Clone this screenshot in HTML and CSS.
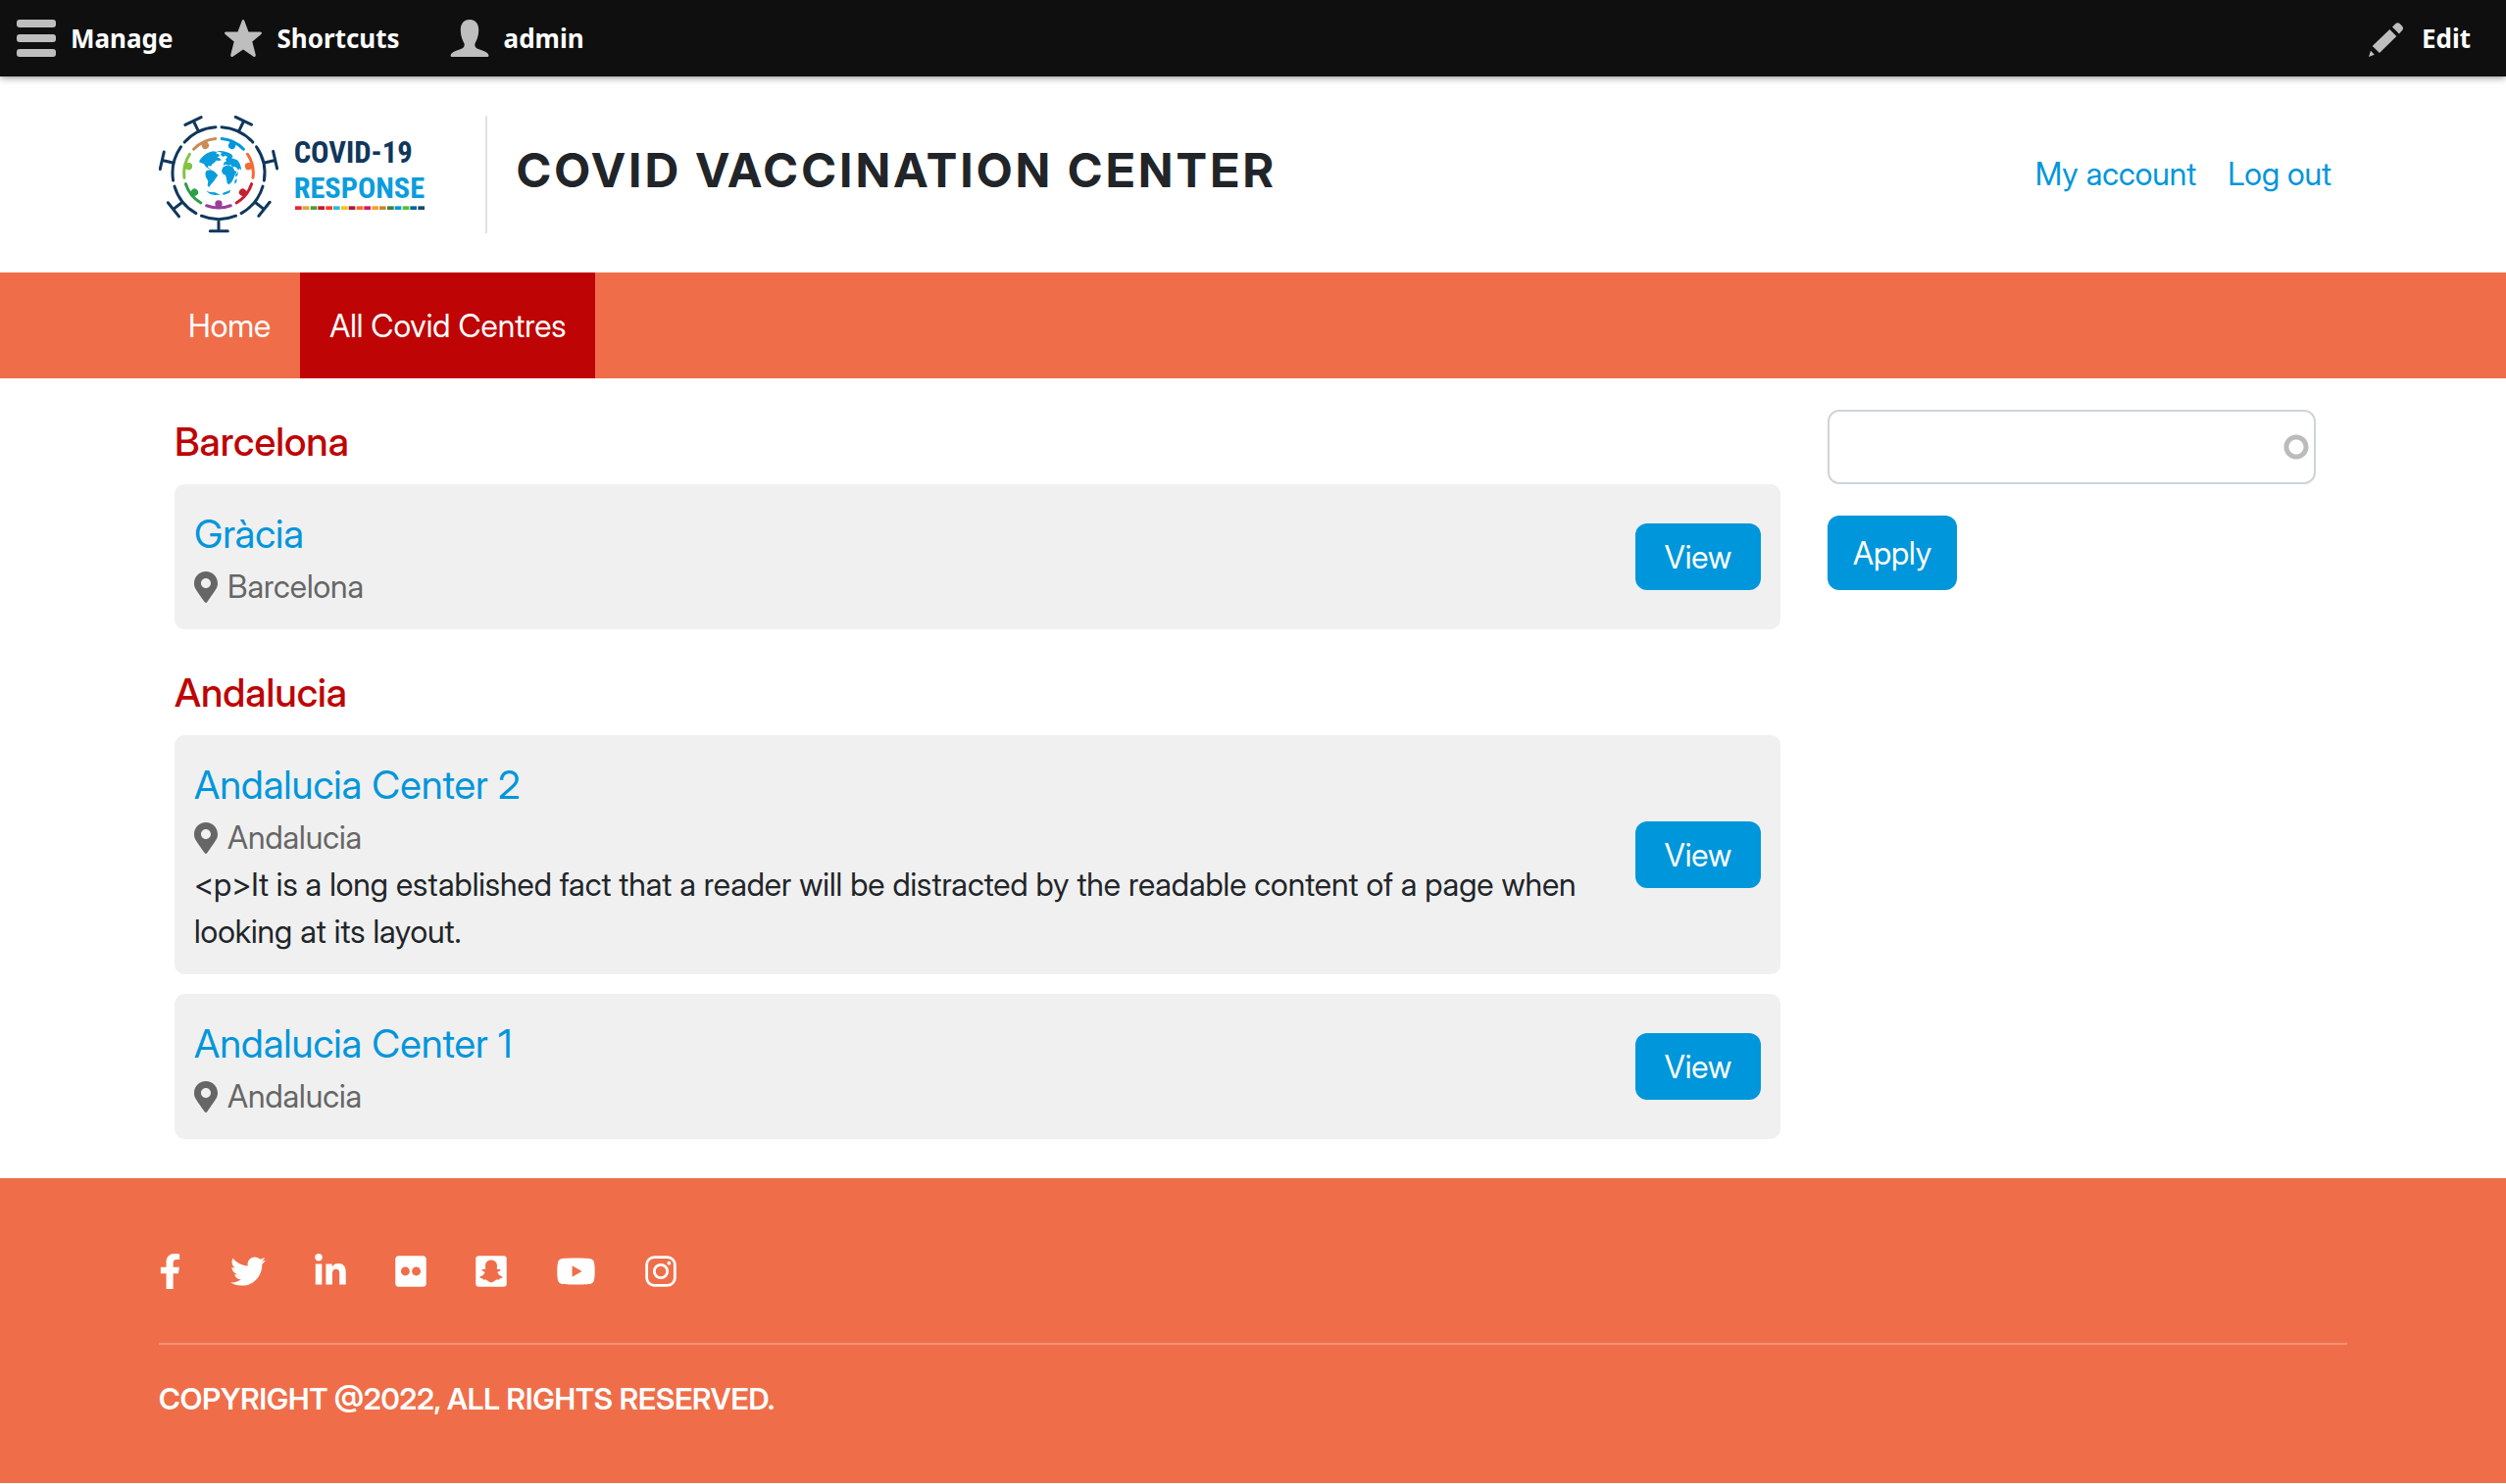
FILE: index.html
```
<!DOCTYPE html>
<html lang="en">
<head>
<meta charset="utf-8">
<meta name="viewport" content="width=device-width, initial-scale=1">
<title>All Covid Centres | Covid Vaccination Center</title>
<link rel="stylesheet" href="styles.css">
</head>
<body>
<svg class="sprite" aria-hidden="true">
  <symbol id="pin" viewBox="0 0 384 512"><path d="M172.268 501.67C26.97 291.031 0 269.413 0 192 0 85.961 85.961 0 192 0s192 85.961 192 192c0 77.413-26.97 99.031-172.268 309.67-9.535 13.774-29.93 13.773-39.464 0zM192 272c44.183 0 80-35.817 80-80s-35.817-80-80-80-80 35.817-80 80 35.817 80 80 80z"/></symbol>
</svg>

<nav class="toolbar" aria-label="Administration">
  <a class="toolbar-item" href="#manage">
    <svg class="toolbar-icon" viewBox="0 0 40 40"><rect y="1" width="40" height="8" rx="3"/><rect y="16" width="40" height="8" rx="3"/><rect y="31" width="40" height="8" rx="3"/></svg>
    Manage
  </a>
  <a class="toolbar-item" href="#shortcuts">
    <svg class="toolbar-icon" viewBox="0 0 40 40"><path d="M18.700 2.200Q20 -.2 21.300 2.200L25.500 13.500H37.600Q40 14 38.300 16L29.300 23.500L32.800 37Q32.800 39.800 30.500 38.700L20 31.500L9.500 38.700Q7.200 39.800 7.200 37L10.700 23.500L1.700 16Q0 14 2.400 13.500H14.500Z"/></svg>
    Shortcuts
  </a>
  <a class="toolbar-item" href="#user">
    <svg class="toolbar-icon" viewBox="0 0 40 40"><path d="M20 1C26 1 29.500 5.500 29.200 12C29 19 26.800 22.500 25.500 25.500C24.700 29 27 30.500 31 31.700C36 33.300 39 35 39.500 37.500Q39.500 39 38 39H2Q.5 39 .5 37.500C1 35 4 33.300 9 31.700C13 30.500 15.300 29 14.500 25.500C13.200 22.500 11 19 10.800 12C10.500 5.500 14 1 20 1Z"/></svg>
    admin
  </a>
  <a class="toolbar-item toolbar-edit" href="#edit">
    <svg class="toolbar-icon" viewBox="0 0 40 40"><path d="M1 39L3 32.800L6.800 36.800ZM22.300 11L29.300 18L12 35L4.700 28ZM25 8.500L28.500 5Q30.500 3.300 32.500 5L35 7.500Q37 9.800 35.300 11.800L32 15.500Z"/></svg>
    Edit
  </a>
</nav>

<header class="header">
  <div class="container header-row">
    <a class="logo" href="#home" aria-label="Home">
      <svg viewBox="36 54 816 360" width="272" height="120">
        <defs>
          <g id="spike"><path d="M166.200 360.700A141 141 0 0 0 271.800 360.700M219 371V407M193 407.500H247"/></g>
          <g id="person"><path d="M182 329.300A106 106 0 0 0 256 329.300" fill="none" stroke="currentColor" stroke-width="9" stroke-linecap="round"/><circle cx="219" cy="324" r="11" fill="currentColor"/></g>
        </defs>
        <g fill="none" stroke="#10375c" stroke-width="9" stroke-linecap="round">
          <use href="#spike"/>
          <use href="#spike" transform="rotate(51.430 219 230)"/>
          <use href="#spike" transform="rotate(102.860 219 230)"/>
          <use href="#spike" transform="rotate(154.290 219 230)"/>
          <use href="#spike" transform="rotate(205.710 219 230)"/>
          <use href="#spike" transform="rotate(257.140 219 230)"/>
          <use href="#spike" transform="rotate(308.570 219 230)"/>
        </g>
        <use href="#person" color="#9a3f98"/>
        <use href="#person" color="#2f9e49" transform="rotate(51.430 219 230)"/>
        <use href="#person" color="#82c341" transform="rotate(102.860 219 230)"/>
        <use href="#person" color="#cb8c55" transform="rotate(154.290 219 230)"/>
        <use href="#person" color="#0096dc" transform="rotate(205.710 219 230)"/>
        <use href="#person" color="#f36b37" transform="rotate(257.140 219 230)"/>
        <use href="#person" color="#c8202f" transform="rotate(308.570 219 230)"/>
        <g fill="#0a9ddd">
          <path d="M159 196C166 178 184 166 203 163L214 165L211 170L218 171L222 178L214 181L221 184L228 190L220 192L212 191L205 199L198 203L196 209L188 207L186 212L191 215L196 219L189 217L180 211L174 202L166 199Z"/>
          <path d="M213 163C229 160 246 164 258 172L263 180L258 184L268 187L276 190C284 199 288 209 288 221L282 215L280 222L274 214L268 210L261 212L257 205L248 206L240 203L233 207L235 198L243 193L240 188L246 181L240 176L231 180L224 172L230 168Z"/>
          <path d="M182 222L195 220L206 225L217 236L210 246L204 255L194 266L190 273L185 268L187 254L180 242L178 231Z"/>
          <path d="M232 212L241 207L255 208L263 213L268 223L275 225L269 235L265 245L259 257L251 265L245 261L243 247L240 236L231 232L228 222Z"/>
          <path d="M270 235L279 226L277 236L271 242ZM268 253L275 247L274 257L268 263ZM181 285L194 288L208 289L224 296L207 297L193 294ZM232 290L245 286L256 281L252 290L240 295L232 297Z"/>
        </g>
        <text class="logo-top" x="449" y="198">COVID-19</text>
        <text class="logo-bottom" x="449" y="305">RESPONSE</text>
        <g>
          <rect x="453" y="331" width="20" height="11" fill="#e5243b"/><rect x="476" y="331" width="20" height="11" fill="#dda63a"/><rect x="500" y="331" width="20" height="11" fill="#4c9f38"/><rect x="523" y="331" width="20" height="11" fill="#c5192d"/><rect x="547" y="331" width="20" height="11" fill="#ff3a21"/><rect x="570" y="331" width="20" height="11" fill="#26bde2"/><rect x="594" y="331" width="20" height="11" fill="#fcc30b"/><rect x="617" y="331" width="20" height="11" fill="#a21942"/><rect x="641" y="331" width="20" height="11" fill="#fd6925"/><rect x="664" y="331" width="20" height="11" fill="#dd1367"/><rect x="688" y="331" width="20" height="11" fill="#fd9d24"/><rect x="711" y="331" width="20" height="11" fill="#bf8b2e"/><rect x="735" y="331" width="20" height="11" fill="#3f7e44"/><rect x="758" y="331" width="20" height="11" fill="#0a97d9"/><rect x="782" y="331" width="20" height="11" fill="#56c02b"/><rect x="805" y="331" width="20" height="11" fill="#00689d"/><rect x="829" y="331" width="20" height="11" fill="#19486a"/>
        </g>
      </svg>
    </a>
    <h1 class="site-name">COVID VACCINATION CENTER</h1>
    <nav class="account" aria-label="User account">
      <a href="#account">My account</a>
      <a href="#logout">Log out</a>
    </nav>
  </div>
</header>

<nav class="menu" aria-label="Main">
  <div class="container menu-row">
    <a class="menu-link" href="#home">Home</a>
    <a class="menu-link active" href="#centres" aria-current="page">All Covid Centres</a>
  </div>
</nav>

<div class="container layout">
  <main class="content">
    <h2 class="region">Barcelona</h2>
    <div class="cards">
      <article class="card">
        <div class="card-body">
          <h3 class="card-title"><a href="#gracia">Gràcia</a></h3>
          <p class="place"><svg class="pin"><use href="#pin"/></svg>Barcelona</p>
        </div>
        <a class="btn btn-view" href="#gracia">View</a>
      </article>
    </div>
    <h2 class="region">Andalucia</h2>
    <div class="cards">
      <article class="card">
        <div class="card-body">
          <h3 class="card-title"><a href="#andalucia-2">Andalucia Center 2</a></h3>
          <p class="place"><svg class="pin"><use href="#pin"/></svg>Andalucia</p>
          <p class="summary">&lt;p&gt;It is a long established fact that a reader will be distracted by the readable content of a page when looking at its layout.</p>
        </div>
        <a class="btn btn-view" href="#andalucia-2">View</a>
      </article>
      <article class="card">
        <div class="card-body">
          <h3 class="card-title"><a href="#andalucia-1">Andalucia Center 1</a></h3>
          <p class="place"><svg class="pin"><use href="#pin"/></svg>Andalucia</p>
        </div>
        <a class="btn btn-view" href="#andalucia-1">View</a>
      </article>
    </div>
  </main>
  <aside class="sidebar">
    <form class="search">
      <input class="search-input" type="text" name="title" aria-label="Centre name" autocomplete="off">
      <button class="btn btn-apply" type="submit">Apply</button>
    </form>
  </aside>
</div>

<footer class="footer">
  <div class="container">
    <div class="social">
      <a href="#facebook" aria-label="Facebook"><svg width="23" height="36" viewBox="0 0 320 512"><path d="M279.140 288l14.220-92.660h-88.910v-60.130c0-25.350 12.420-50.060 52.240-50.060h40.420V6.260S260.430 0 225.360 0c-73.220 0-121.080 44.380-121.080 124.720v70.620H22.890V288h81.390v224h100.170V288z"/></svg></a>
      <a href="#twitter" aria-label="Twitter"><svg width="36" height="36" viewBox="0 0 512 512"><path d="M459.370 151.716c.325 4.548.325 9.097.325 13.645 0 138.720-105.583 298.558-298.558 298.558-59.452 0-114.680-17.219-161.137-47.106 8.447.974 16.568 1.299 25.340 1.299 49.055 0 94.213-16.568 130.274-44.832-46.132-.975-84.792-31.188-98.112-72.772 6.498.974 12.995 1.624 19.818 1.624 9.421 0 18.843-1.300 27.614-3.573-48.081-9.747-84.143-51.980-84.143-102.985v-1.299c13.969 7.797 30.214 12.670 47.431 13.319-28.264-18.843-46.781-51.005-46.781-87.391 0-19.492 5.197-37.360 14.294-52.954 51.655 63.675 129.300 105.258 216.365 109.807-1.624-7.797-2.599-15.918-2.599-24.040 0-57.828 46.782-104.934 104.934-104.934 30.213 0 57.502 12.670 76.670 33.137 23.715-4.548 46.456-13.320 66.599-25.340-7.798 24.366-24.366 44.833-46.132 57.827 21.117-2.273 41.584-8.122 60.426-16.243-14.292 20.791-32.161 39.308-52.628 54.253z"/></svg></a>
      <a href="#linkedin" aria-label="LinkedIn"><svg width="32" height="36" viewBox="0 0 448 512"><path d="M100.280 448H7.400V148.900h92.880zM53.790 108.100C24.090 108.100 0 83.500 0 53.800a53.790 53.790 0 0 1 107.580 0c0 29.700-24.100 54.300-53.790 54.300zM447.900 448h-92.680V302.400c0-34.700-.7-79.200-48.290-79.200-48.290 0-55.690 37.700-55.690 76.700V448h-92.780V148.900h89.080v40.800h1.300c12.400-23.500 42.690-48.300 87.880-48.300 94 0 111.280 61.900 111.280 142.300V448z"/></svg></a>
      <a href="#flickr" aria-label="Flickr"><svg width="32" height="36" viewBox="0 0 448 512"><path d="M400 32H48C21.500 32 0 53.500 0 80v352c0 26.500 21.500 48 48 48h352c26.500 0 48-21.500 48-48V80c0-26.500-21.500-48-48-48zM144.500 319c-35.100 0-63.500-28.400-63.500-63.500s28.400-63.500 63.500-63.500 63.500 28.400 63.500 63.500-28.400 63.500-63.500 63.500zm159 0c-35.100 0-63.500-28.400-63.500-63.500s28.400-63.500 63.500-63.500 63.500 28.400 63.500 63.500-28.400 63.500-63.500 63.500z"/></svg></a>
      <a href="#snapchat" aria-label="Snapchat"><svg width="32" height="36" viewBox="0 0 448 512"><rect y="32" width="448" height="448" rx="46"/><path class="ghost" d="M224 94C268 94 309 124 309 176L307 228C320 232 332 224 344 224C364 228 362 246 346 252C332 258 312 262 318 278C330 306 352 324 386 334C398 342 382 354 348 360L342 378C326 382 304 372 284 386C266 398 248 416 224 416C200 416 182 398 164 386C144 372 122 382 106 378L100 360C66 354 50 342 62 334C96 324 118 306 130 278C136 262 116 258 102 252C86 246 84 228 104 224C116 224 128 232 141 228L139 176C139 124 180 94 224 94Z"/></svg></a>
      <a href="#youtube" aria-label="YouTube"><svg width="41" height="36" viewBox="0 0 576 512"><path d="M549.655 124.083c-6.281-23.650-24.787-42.276-48.284-48.597C458.781 64 288 64 288 64S117.220 64 74.629 75.486c-23.497 6.322-42.003 24.947-48.284 48.597-11.412 42.867-11.412 132.305-11.412 132.305s0 89.438 11.412 132.305c6.281 23.650 24.787 41.500 48.284 47.821C117.220 448 288 448 288 448s170.780 0 213.371-11.486c23.497-6.321 42.003-24.171 48.284-47.821 11.412-42.867 11.412-132.305 11.412-132.305s0-89.438-11.412-132.305zm-317.510 213.508V175.185l142.739 81.205-142.739 81.201z"/></svg></a>
      <a href="#instagram" aria-label="Instagram"><svg width="32" height="36" viewBox="0 0 448 512"><g fill="none" stroke="#fff" stroke-width="40"><rect x="20" y="52" width="408" height="408" rx="108"/><circle cx="224" cy="256" r="95"/></g><circle cx="343" cy="137" r="27"/></svg></a>
    </div>
    <p class="copyright">COPYRIGHT @2022, ALL RIGHTS RESERVED.</p>
  </div>
</footer>
</body>
</html>
```
FILE: styles.css
```
* { box-sizing: border-box; }

body {
  margin: 0;
  background: #fff;
  color: #212529;
  font-family: "Inter Display", Inter, "Liberation Sans", sans-serif;
  font-size: 32px;
  line-height: 48px;
}

h1, h2, h3, p { margin: 0; }
a { color: #0096db; text-decoration: none; }
svg { display: block; flex: none; }

.sprite { position: absolute; width: 0; height: 0; }

.container {
  max-width: 2280px;
  margin: 0 auto;
  padding: 0 24px;
}

/* Admin toolbar */
.toolbar {
  display: flex;
  position: relative;
  background: #0f0f0f;
  box-shadow: 0 0 8px rgba(0, 0, 0, .6);
}
.toolbar-item {
  display: flex;
  align-items: center;
  gap: 15px;
  height: 78px;
  padding: 0 34px 0 17px;
  color: #fff;
  font: bold 26px/40px "Noto Sans", "Open Sans", sans-serif;
}
.toolbar-edit { margin-left: auto; padding-right: 36px; }
.toolbar-icon { width: 40px; height: 40px; fill: #bebebe; }

/* Site header */
.header { padding: 40px 0; }
.header-row { display: flex; }
.logo { padding-right: 61px; border-right: 2px solid #dee2e6; }
.logo-top, .logo-bottom {
  font-family: "Roboto Condensed", "Liberation Sans Narrow", sans-serif;
  font-weight: bold;
}
.logo-top { fill: #10375c; font-size: 92px; }
.logo-bottom { fill: #0a9ddd; font-size: 91px; }
.site-name {
  padding: 27px 0 0 30px;
  font-size: 48px;
  line-height: 58px;
  font-weight: 700;
  letter-spacing: 4px;
}
.account {
  display: flex;
  align-items: center;
  gap: 32px;
  margin-left: auto;
  padding-right: 16px;
}

/* Main menu */
.menu { background: #ef6e49; }
.menu-row { display: flex; }
.menu-link { padding: 31px 30px 29px; color: #fff; }
.menu-link.active { background: #be0404; }

/* Page body */
.layout { display: grid; grid-template-columns: 3fr 1fr; }
.content { min-width: 0; padding: 0 20px 40px 16px; }
.region {
  padding: 41px 0 19px;
  color: #be0404;
  font-size: 40px;
  line-height: 48px;
  font-weight: 500;
}
.cards { display: grid; gap: 20px; }
.card {
  display: flex;
  align-items: center;
  gap: 40px;
  padding: 20px;
  border-radius: 10px;
  background: #f0f0f0;
}
.card-body { flex: 1; min-width: 0; padding: 1px 0 0; margin-bottom: -1px; }
.card-title { font-size: 40px; line-height: 60px; font-weight: 400; }
.place { display: flex; align-items: center; gap: 10px; color: #666; }
.pin { width: 24px; height: 32px; fill: #666; }

.btn {
  border: 0;
  border-radius: 12px;
  background: #0096db;
  color: #fff;
  font: inherit;
  text-align: center;
}
.btn-view { padding: 11px 30px 9px; }
.btn-apply { padding: 15px 26px 13px; }

.sidebar { padding: 32px 32px 0 28px; }
.search {
  display: flex;
  flex-direction: column;
  align-items: flex-start;
  gap: 32px;
}
.search-input {
  width: 100%;
  height: 76px;
  padding: 12px 40px 12px 24px;
  border: 2px solid #ced4da;
  border-radius: 12px;
  background: radial-gradient(circle at calc(100% - 18px) 50%, transparent 7px, #bbb 8px, #bbb 12px, transparent 13px) #fff;
  font: inherit;
}

/* Footer */
.footer { padding: 77px 0 62px; background: #ef6e49; color: #fff; }
.social {
  display: flex;
  gap: 50px;
  padding-bottom: 55px;
  border-bottom: 2px solid rgba(255, 255, 255, .25);
}
.social svg { fill: #fff; }
.social .ghost { fill: #ef6e49; }
.copyright {
  padding-top: 31px;
  font-size: 30px;
  font-weight: 600;
}
```
